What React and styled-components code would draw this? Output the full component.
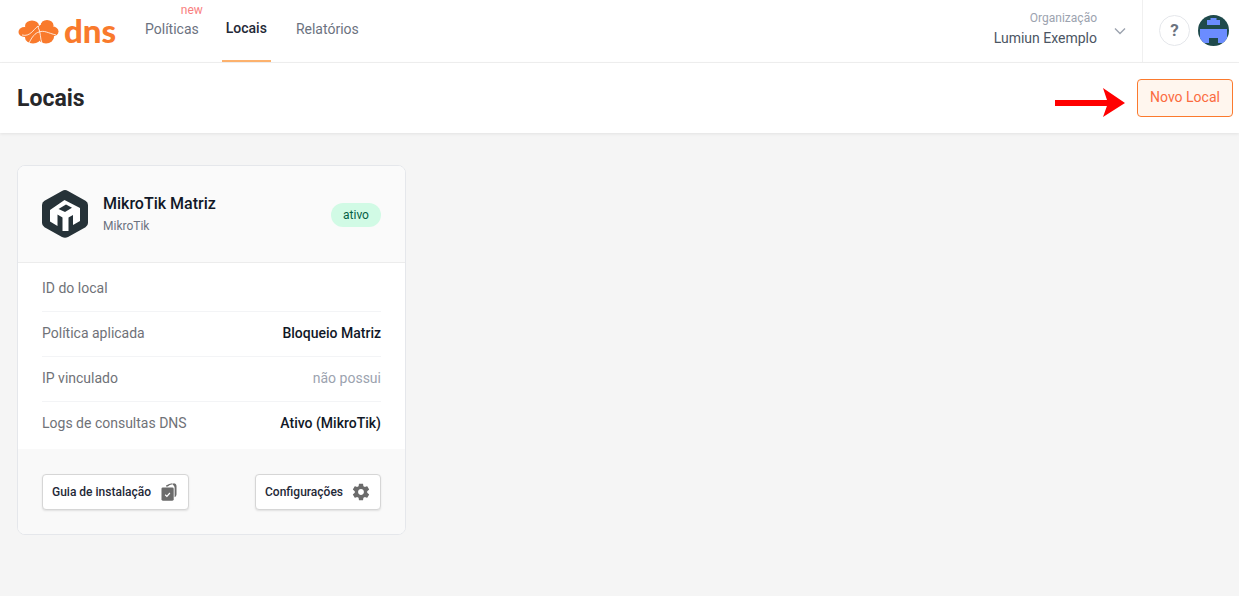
import React from "react";
import styled, { createGlobalStyle } from "styled-components";

const Global = createGlobalStyle`
  html, body { margin: 0; padding: 0; background: #f5f5f5; }
  body { font-family: Roboto, "Liberation Sans", sans-serif; }
  * { box-sizing: border-box; }
`;
const Page = styled.div`
  width: 1239px; height: 596px; overflow: hidden; background: #f5f5f5; position: relative;
`;
const TopBar = styled.header`
  height: 63px; background: #fff; border-bottom: 1px solid #f0f0f0;
  display: flex; align-items: stretch; padding-left: 18px;
`;
const Logo = styled.div`
  width: 99px; margin-right: 24px; display: flex; align-items: center; gap: 5px; height: 62px;
`;
const LogoText = styled.span`
  font-family: Lato, Roboto, sans-serif; font-weight: 900; font-size: 33px; line-height: 1;
  color: #f97a2c; margin-top: -1px;
`;
const Nav = styled.nav`
  display: flex; align-items: stretch; gap: 20px;
`;
const NavItem = styled.a`
  position: relative; display: flex; align-items: center; padding: 0 4px;
  padding-bottom: ${p => p.$active ? 5 : 2}px;
  margin: ${p => p.$active ? "0 1px 0 -1px" : "0"};
  font-size: 14px; line-height: 20px; color: ${p => p.$active ? "#1f2937" : "#6b7280"};
  font-weight: ${p => p.$active ? 500 : 400};
  border-bottom: 2px solid ${p => p.$active ? "#fdb26e" : "transparent"};
  height: 62px;
`;
const NewTag = styled.span`
  position: absolute; top: 3px; right: 0; font-size: 12px; line-height: 14px; color: #f98080;
`;
const Spacer = styled.div` flex: 1; `;
const OrgBlock = styled.div`
  display: flex; align-items: center; height: 62px; padding-right: 15px; width: 170px;
  justify-content: flex-end; border-right: 1px solid #f0f0f0; gap: 16px;
`;
const OrgText = styled.div`
  display: flex; flex-direction: column; align-items: flex-end; margin-top: -4px;
`;
const OrgLabel = styled.span` font-size: 12px; line-height: 16px; color: #9ca3af; `;
const OrgName = styled.span` font-size: 14px; line-height: 20px; color: #4b5563; margin-top: 2px; `;
const Actions = styled.div`
  display: flex; align-items: center; gap: 8px; padding: 0 10px 0 16px; height: 62px; margin-top: -1px;
`;
const HelpBtn = styled.div`
  width: 31px; height: 31px; border-radius: 50%; border: 1px solid #e5e7eb; background: #fff;
  display: flex; align-items: center; justify-content: center;
  font-size: 17px; font-weight: 700; color: #6b7280;
`;
const Avatar = styled.svg` width: 31px; height: 31px; border-radius: 50%; display: block; `;
const SubHeader = styled.div`
  height: 70px; background: #fff; box-shadow: 0 1px 3px rgba(0,0,0,0.08);
  display: flex; align-items: center; justify-content: space-between; padding: 0 6px 0 17px;
  position: relative;
`;
const Title = styled.h1`
  margin: 1px 0 0; font-size: 23px; line-height: 32px; font-weight: 700; color: #27272a;
`;
const NewButton = styled.button`
  width: 96px; height: 38px; border-radius: 4px; border: 1px solid #fb7a2e; background: #fff6ee;
  color: #fb6b3f; font: 400 14px/20px Roboto, sans-serif; padding: 0 0 2px; margin-top: -1px;
`;
const Arrow = styled.svg`
  position: absolute; left: 1055px; top: 25px; width: 72px; height: 30px;
`;
const Content = styled.main` padding: 32px 17px; `;
const Card = styled.section`
  width: 389px; height: 370px; border: 1px solid #e5e7eb; border-radius: 8px; background: #fff; overflow: hidden;
  display: flex; flex-direction: column;
`;
const CardHead = styled.div`
  height: 97px; background: #fafafa; border-bottom: 1px solid #ececec;
  display: flex; align-items: center; padding: 0 24px; gap: 15px;
`;
const Hex = styled.svg` width: 46px; height: 48px; flex: none; `;
const HeadText = styled.div` flex: 1; display: flex; flex-direction: column; margin-top: -1px; `;
const DeviceName = styled.span` font-size: 16px; line-height: 24px; font-weight: 500; color: #111827; `;
const DeviceType = styled.span` font-size: 12px; line-height: 18px; color: #6b7280; margin-top: 1px; `;
const Badge = styled.span`
  width: 50px; height: 24px; border-radius: 12px; background: #d1fae5; color: #065f46;
  font-size: 12px; line-height: 24px; text-align: center; margin-top: 2px;
`;
const Rows = styled.div` padding: 3px 24px 0; flex: 1; `;
const Row = styled.div`
  height: 45px; display: flex; align-items: center; justify-content: space-between;
  font-size: 14px; line-height: 20px;
  border-top: ${p => p.$first ? "none" : "1px solid #f3f4f6"};
  padding-bottom: ${p => p.$first ? 1 : 2}px;
`;
const RowLabel = styled.span` color: #6f7278; `;
const RowValue = styled.span`
  color: ${p => p.$muted ? "#9ca3af" : "#111827"}; font-weight: ${p => p.$muted ? 400 : 500};
`;
const CardFoot = styled.div`
  height: 85px; background: #f9f9f9; padding: 0 24px; display: flex; align-items: center;
  justify-content: space-between;
`;
const FootButton = styled.button`
  height: 36px; border: 1px solid #d6d6d6; border-radius: 4px; background: #fff;
  box-shadow: 0 1px 2px rgba(0,0,0,0.1); display: flex; align-items: center;
  justify-content: space-between; padding: 0 ${p => p.$pr}px 0 9px; width: ${p => p.$w}px;
  font: 500 12px/16px Roboto, sans-serif; color: #1f2937;
`;

const LogoMark = () => (
  <svg width="41" height="25" viewBox="0 0 41 25" aria-hidden="true">
    <g fill="#f97a2c">
      <ellipse cx="6.5" cy="13" rx="6" ry="5" />
      <ellipse cx="14" cy="7" rx="7" ry="5.5" />
      <ellipse cx="15" cy="18.5" rx="8" ry="6" />
      <ellipse cx="29" cy="6.5" rx="6.5" ry="5.5" />
      <ellipse cx="28" cy="18" rx="8" ry="6.5" />
      <ellipse cx="34.5" cy="12.5" rx="6" ry="5" />
      <rect x="12" y="6" width="18" height="13" />
    </g>
    <path d="M4 16 C12 18 15 11 20 7 M11 24 C14 18 17 14 21 13 C26 11 30 14 38 16 M24 1 C23 4 22 6 20 8 C23 13 22 20 24 24" fill="none" stroke="#fff" strokeWidth="0.8" />
  </svg>
);
const Chevron = () => (
  <svg width="14" height="14" viewBox="0 0 14 14" fill="none" stroke="#9ca3af" strokeWidth="1.4" aria-hidden="true">
    <path d="M2 4.5 L7 9.5 L12 4.5" />
  </svg>
);
const Copies = () => (
  <svg width="16" height="18" viewBox="0 0 16 18" aria-hidden="true">
    <path d="M5 2.6 Q8 0.6 11.5 0.3 L11.5 1.2 Q8.5 1.6 6.8 3.4 L5 3.4 Z" fill="#6b6b6b" />
    <path d="M12.5 0.3 Q15.4 0.6 15.5 3 L15.5 11.5 Q15.4 13.5 13.6 14.2 L13.6 4.5 Q13.5 2.2 11.5 1.8 Z" fill="#6b6b6b" />
    <rect x="0.5" y="4.4" width="12.2" height="13.3" rx="1.4" fill="#6b6b6b" />
    <path d="M4.2 11.8 L5.9 13.4 L8.9 10" fill="none" stroke="#fff" strokeWidth="1.2" />
  </svg>
);
const Gear = () => (
  <svg width="20" height="20" viewBox="0 0 24 24" aria-hidden="true">
    <path fill="#6b6b6b" d="M19.43 12.98c.04-.32.07-.64.07-.98s-.03-.66-.07-.98l2.11-1.65c.19-.15.24-.42.12-.64l-2-3.46c-.12-.22-.39-.3-.61-.22l-2.49 1c-.52-.4-1.08-.73-1.69-.98l-.38-2.65C14.46 2.18 14.25 2 14 2h-4c-.25 0-.46.18-.49.42l-.38 2.65c-.61.25-1.17.59-1.69.98l-2.49-1c-.23-.09-.49 0-.61.22l-2 3.46c-.13.22-.07.49.12.64l2.11 1.65c-.04.32-.07.65-.07.98s.03.66.07.98l-2.11 1.65c-.19.15-.24.42-.12.64l2 3.46c.12.22.39.3.61.22l2.49-1c.52.4 1.08.73 1.69.98l.38 2.65c.03.24.24.42.49.42h4c.25 0 .46-.18.49-.42l.38-2.65c.61-.25 1.17-.59 1.69-.98l2.49 1c.23.09.49 0 .61-.22l2-3.46c.12-.22.07-.49-.12-.64l-2.11-1.65zM12 15.5c-1.93 0-3.5-1.57-3.5-3.5s1.57-3.5 3.5-3.5 3.5 1.57 3.5 3.5-1.57 3.5-3.5 3.5z" />
  </svg>
);

export default function App() {
  return (
    <Page>
      <Global />
      <TopBar>
        <Logo>
          <LogoMark />
          <LogoText>dns</LogoText>
        </Logo>
        <Nav>
          <NavItem>Políticas<NewTag>new</NewTag></NavItem>
          <NavItem $active>Locais</NavItem>
          <NavItem>Relatórios</NavItem>
        </Nav>
        <Spacer />
        <OrgBlock>
          <OrgText>
            <OrgLabel>Organização</OrgLabel>
            <OrgName>Lumiun Exemplo</OrgName>
          </OrgText>
          <Chevron />
        </OrgBlock>
        <Actions>
          <HelpBtn>?</HelpBtn>
          <Avatar viewBox="0 0 31 31" aria-hidden="true">
            <rect width="31" height="31" fill="#1f4a4c" />
            <path d="M12.5 3 H18.5 V5 H22 V10 H9 V5 H12.5 Z" fill="#6b8cff" />
            <path d="M2 14 H29 V28 H20 V23 H11 V28 H2 Z" fill="#6b8cff" />
          </Avatar>
        </Actions>
      </TopBar>
      <SubHeader>
        <Title>Locais</Title>
        <NewButton>Novo Local</NewButton>
        <Arrow viewBox="0 0 72 30" aria-hidden="true">
          <path d="M0 12 H56 V18 H0 Z" fill="#ff0000" />
          <path d="M48 0 L70 15 L48 29 L53 15 Z" fill="#ff0000" />
        </Arrow>
      </SubHeader>
      <Content>
        <Card>
          <CardHead>
            <Hex viewBox="0 0 46 48" aria-hidden="true">
              <path d="M23 0 Q24.5 0 26 .9 L43.5 10.8 Q46 12.2 46 15 V33 Q46 35.8 43.5 37.2 L26 47.1 Q23 48.6 20 47.1 L2.5 37.2 Q0 35.8 0 33 V15 Q0 12.2 2.5 10.8 L20 .9 Q21.5 0 23 0 Z" fill="#263238" />
              <path d="M8 20 L22.5 10 L38 18 V31 L31 35 V25 L26.5 27.5 V41 L20.5 41 V27.5 L15.5 24.5 V36 L8 31.5 Z" fill="#fff" />
              <path d="M16.5 19 L24 14.6 L30 17.8 L23 22 Z" fill="#263238" />
            </Hex>
            <HeadText>
              <DeviceName>MikroTik Matriz</DeviceName>
              <DeviceType>MikroTik</DeviceType>
            </HeadText>
            <Badge>ativo</Badge>
          </CardHead>
          <Rows>
            <Row $first><RowLabel>ID do local</RowLabel></Row>
            <Row><RowLabel>Política aplicada</RowLabel><RowValue>Bloqueio Matriz</RowValue></Row>
            <Row><RowLabel>IP vinculado</RowLabel><RowValue $muted>não possui</RowValue></Row>
            <Row><RowLabel>Logs de consultas DNS</RowLabel><RowValue>Ativo (MikroTik)</RowValue></Row>
          </Rows>
          <CardFoot>
            <FootButton $w={147} $pr={11}>Guia de instalação<Copies /></FootButton>
            <FootButton $w={126} $pr={9}>Configurações<Gear /></FootButton>
          </CardFoot>
        </Card>
      </Content>
    </Page>
  );
}
